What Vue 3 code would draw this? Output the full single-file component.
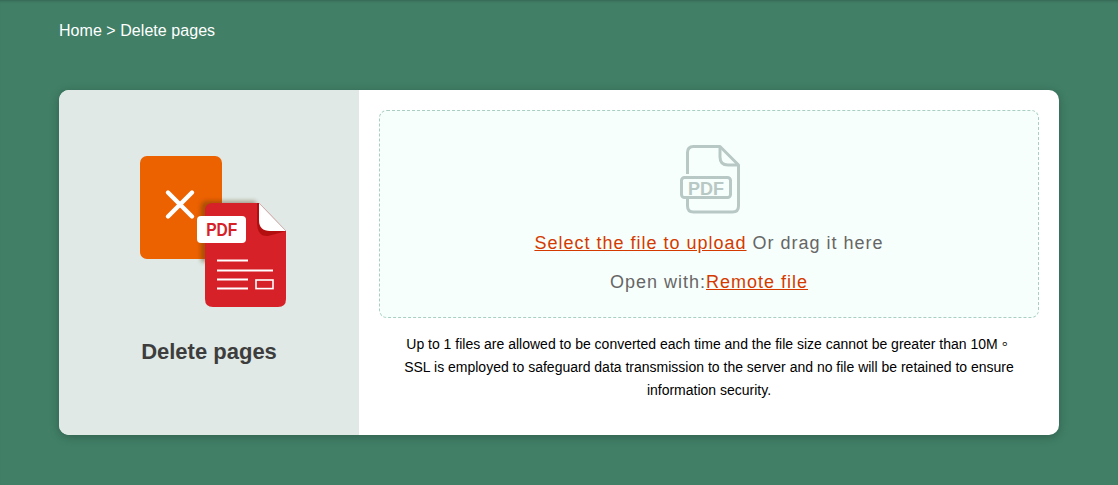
<script setup>
const title = 'Delete pages'
</script>

<template>
  <div class="page">
    <nav class="crumb">Home &gt; {{ title }}</nav>
    <main class="card">
      <aside class="side">
        <svg class="tool-icon" width="146" height="151" viewBox="0 0 146 151">
          <defs>
            <filter id="soft" x="-20%" y="-20%" width="140%" height="140%">
              <feGaussianBlur stdDeviation="2" />
            </filter>
          </defs>
          <rect x="0" y="0" width="82" height="103" rx="7" fill="#ec6100" />
          <path d="M28 36.500 L52 60.500 M52 36.500 L28 60.500" stroke="#fff" stroke-width="4.400" stroke-linecap="round" />
          <path d="M61 52 Q61 45 67 45 H116 V60 H70 V106 H61 Z" fill="#5a3a10" opacity=".45" filter="url(#soft)" />
          <path d="M65 55 Q65 47 73 47 H119 L146 75 V143 Q146 151 138 151 H73 Q65 151 65 143 Z" fill="#d62128" />
          <path d="M117 47 H119 L146 75 Q136 78 128 80 Q117 81 117 66 Z" fill="#b30f10" />
          <path d="M119 47 L146 75 L130 75 Q119 75 119 64 Z" fill="#fff" />
          <path d="M119 47 L146 75" stroke="#c9b9b9" stroke-width=".7" />
          <rect x="57" y="60" width="49" height="27" rx="4" fill="#fff" />
          <text x="81.700" y="80" class="badge" textLength="31" lengthAdjust="spacingAndGlyphs">PDF</text>
          <path d="M77 104.500 H108 M77 114.500 H133 M77 123.500 H108 M77 132.500 H108" stroke="#fff" stroke-width="2" />
          <rect x="116" y="124" width="17" height="8.600" fill="none" stroke="#fff" stroke-width="1.600" />
        </svg>
        <h1 class="title">{{ title }}</h1>
      </aside>
      <section class="content">
        <div class="drop">
          <svg class="pdf-icon" width="60" height="70" viewBox="0 0 60 70">
            <path d="M7.500 30 V8.500 Q7.500 2.500 13.500 2.500 H40 L58.500 21 V62 Q58.500 68 52.500 68 H13.500 Q7.500 68 7.500 62 V50" fill="none" stroke="#b8c8c4" stroke-width="3" stroke-linejoin="round" />
            <path d="M40 2.500 V13 Q40 21 48 21 H58.500" fill="none" stroke="#b8c8c4" stroke-width="3" stroke-linejoin="round" />
            <rect x="1.500" y="33.500" width="49" height="20" rx="3" fill="#f7fffc" stroke="#b8c8c4" stroke-width="3" />
            <text x="26" y="50.500" class="pdf-label">PDF</text>
          </svg>
          <p class="line first">
            <a class="link">Select the file to upload</a> Or drag it here
          </p>
          <p class="line second">
            Open with:<a class="link">Remote file</a>
          </p>
        </div>
        <div class="note">
          <p>Up to 1 files are allowed to be converted each time and the file size cannot be greater than 10M。</p>
          <p>SSL is employed to safeguard data transmission to the server and no file will be retained to ensure information security.</p>
        </div>
      </section>
    </main>
  </div>
</template>

<style scoped>
.page {
  width: 1118px;
  height: 485px;
  box-sizing: border-box;
  padding: 0 59px;
  overflow: hidden;
  background: #417f67;
  box-shadow: inset 0 3px 3px -2px rgba(0, 0, 0, .2);
  font-family: "Liberation Sans", Arial, sans-serif;
}
.crumb {
  height: 90px;
  padding-top: 22px;
  box-sizing: border-box;
  font-size: 16px;
  line-height: 18px;
  letter-spacing: .05px;
  color: #fff;
}
.card {
  display: flex;
  width: 1000px;
  height: 345px;
  border-radius: 10px;
  overflow: hidden;
  background: #fff;
  box-shadow: 0 2px 10px rgba(0, 0, 0, .25);
}
.side {
  width: 300px;
  flex: none;
  display: flex;
  flex-direction: column;
  align-items: center;
  background: #e0e9e5;
}
.tool-icon {
  margin-top: 66px;
  margin-left: 8px;
}
.badge {
  font: bold 18px "Liberation Sans", Arial, sans-serif;
  fill: #d62128;
  text-anchor: middle;
}
.title {
  margin: 32px 0 0;
  font-size: 22px;
  line-height: 26px;
  font-weight: bold;
  color: #3d3d3d;
}
.content {
  flex: 1;
  padding: 20px;
}
.drop {
  height: 208px;
  box-sizing: border-box;
  border: 1px dashed #a9cfc4;
  border-radius: 8px;
  background: #f7fffc;
  text-align: center;
  padding-top: 33px;
}
.pdf-icon {
  display: block;
  margin: 0 auto;
  transform: translateX(1px);
}
.pdf-label {
  font: bold 18px "Liberation Sans", Arial, sans-serif;
  fill: #b8c8c4;
  text-anchor: middle;
}
.line {
  margin: 0;
  font-size: 18px;
  line-height: 22px;
  letter-spacing: 1px;
  color: #666;
}
.first { margin-top: 18px; }
.second { margin-top: 17px; }
.link {
  color: #d43a00;
  text-decoration: underline;
}
.note {
  margin-top: 15px;
  text-align: center;
  font-size: 14px;
  line-height: 23px;
  color: #000;
  font-family: "Liberation Sans", "Noto Sans CJK TC", sans-serif;
}
.note p { margin: 0; }
</style>
